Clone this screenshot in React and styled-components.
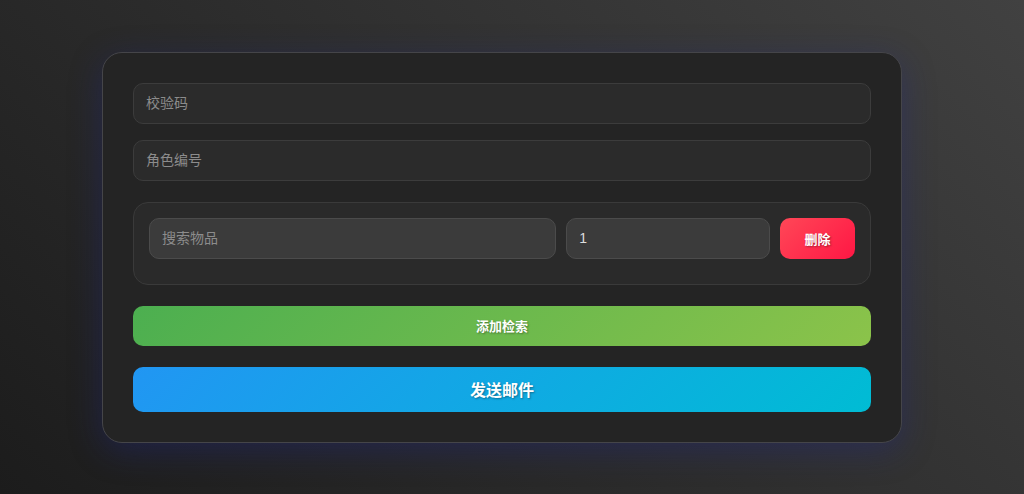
import React from "react"
import styled, { createGlobalStyle } from "styled-components"

const GlobalStyle = createGlobalStyle`
  html, body {
    margin: 0;
    padding: 0;
  }

  body {
    min-height: 100vh;
    background: linear-gradient(45deg, #1c1c1c 0%, #2e2e2e 50%, #414141 100%);
    font-family: "Liberation Sans", "Noto Sans CJK SC", sans-serif;
  }

  * {
    box-sizing: border-box;
  }
`

const Page = styled.div`
  min-height: 100vh;
  display: flex;
  align-items: center;
  justify-content: center;
  padding-right: 20px;
`

const Card = styled.form`
  width: 800px;
  padding: 30px;
  background: #242424;
  border: 1px solid #454549;
  border-radius: 20px;
  box-shadow: 0 8px 32px 0 rgba(31, 38, 135, 0.37);
  display: flex;
  flex-direction: column;
  gap: 16px;
`

const Field = styled.input`
  width: 100%;
  height: 41px;
  padding: 0 12px;
  font-family: inherit;
  font-size: 14px;
  color: #dddddd;
  background: ${p => (p.$raised ? "#3b3b3b" : "#2b2b2b")};
  border: 1px solid ${p => (p.$raised ? "#4b4b4b" : "#3c3c3c")};
  border-radius: 10px;
  outline: none;
  min-width: 0;

  &::placeholder {
    color: #8c8c8c;
  }
`

const ItemBox = styled.div`
  margin-top: 5px;
  padding: 15px 15px 25px;
  background: #2a2a2a;
  border: 1px solid #3a3a3a;
  border-radius: 15px;
`

const ItemRow = styled.div`
  display: grid;
  grid-template-columns: minmax(0, 2fr) minmax(0, 1fr) 75px;
  gap: 10px;
  align-items: center;
`

const Button = styled.button`
  border: none;
  color: #ffffff;
  font-family: inherit;
  font-weight: 700;
  text-shadow: 1px 1px 2px rgba(0, 0, 0, 0.35);
  border-radius: 10px;
  cursor: pointer;
`

const DeleteButton = styled(Button)`
  height: 41px;
  font-size: 13px;
  background: linear-gradient(135deg, #ff4757, #ff1744);
`

const WideButton = styled(Button)`
  width: 100%;
  margin-top: 5px;
  height: ${p => (p.$tall ? "45px" : "40px")};
  font-size: ${p => (p.$tall ? "16px" : "13px")};
  background: ${p => p.$bg};
`

const App = () => (
  <>
    <GlobalStyle />
    <Page>
      <Card onSubmit={e => e.preventDefault()}>
        <Field placeholder="校验码" />
        <Field placeholder="角色编号" />
        <ItemBox>
          <ItemRow>
            <Field $raised placeholder="搜索物品" />
            <Field $raised defaultValue="1" />
            <DeleteButton type="button">删除</DeleteButton>
          </ItemRow>
        </ItemBox>
        <WideButton type="button" $bg="linear-gradient(135deg, #4caf50, #8bc34a)">
          添加检索
        </WideButton>
        <WideButton type="submit" $tall $bg="linear-gradient(135deg, #2196f3, #00bcd4)">
          发送邮件
        </WideButton>
      </Card>
    </Page>
  </>
)

export default App
